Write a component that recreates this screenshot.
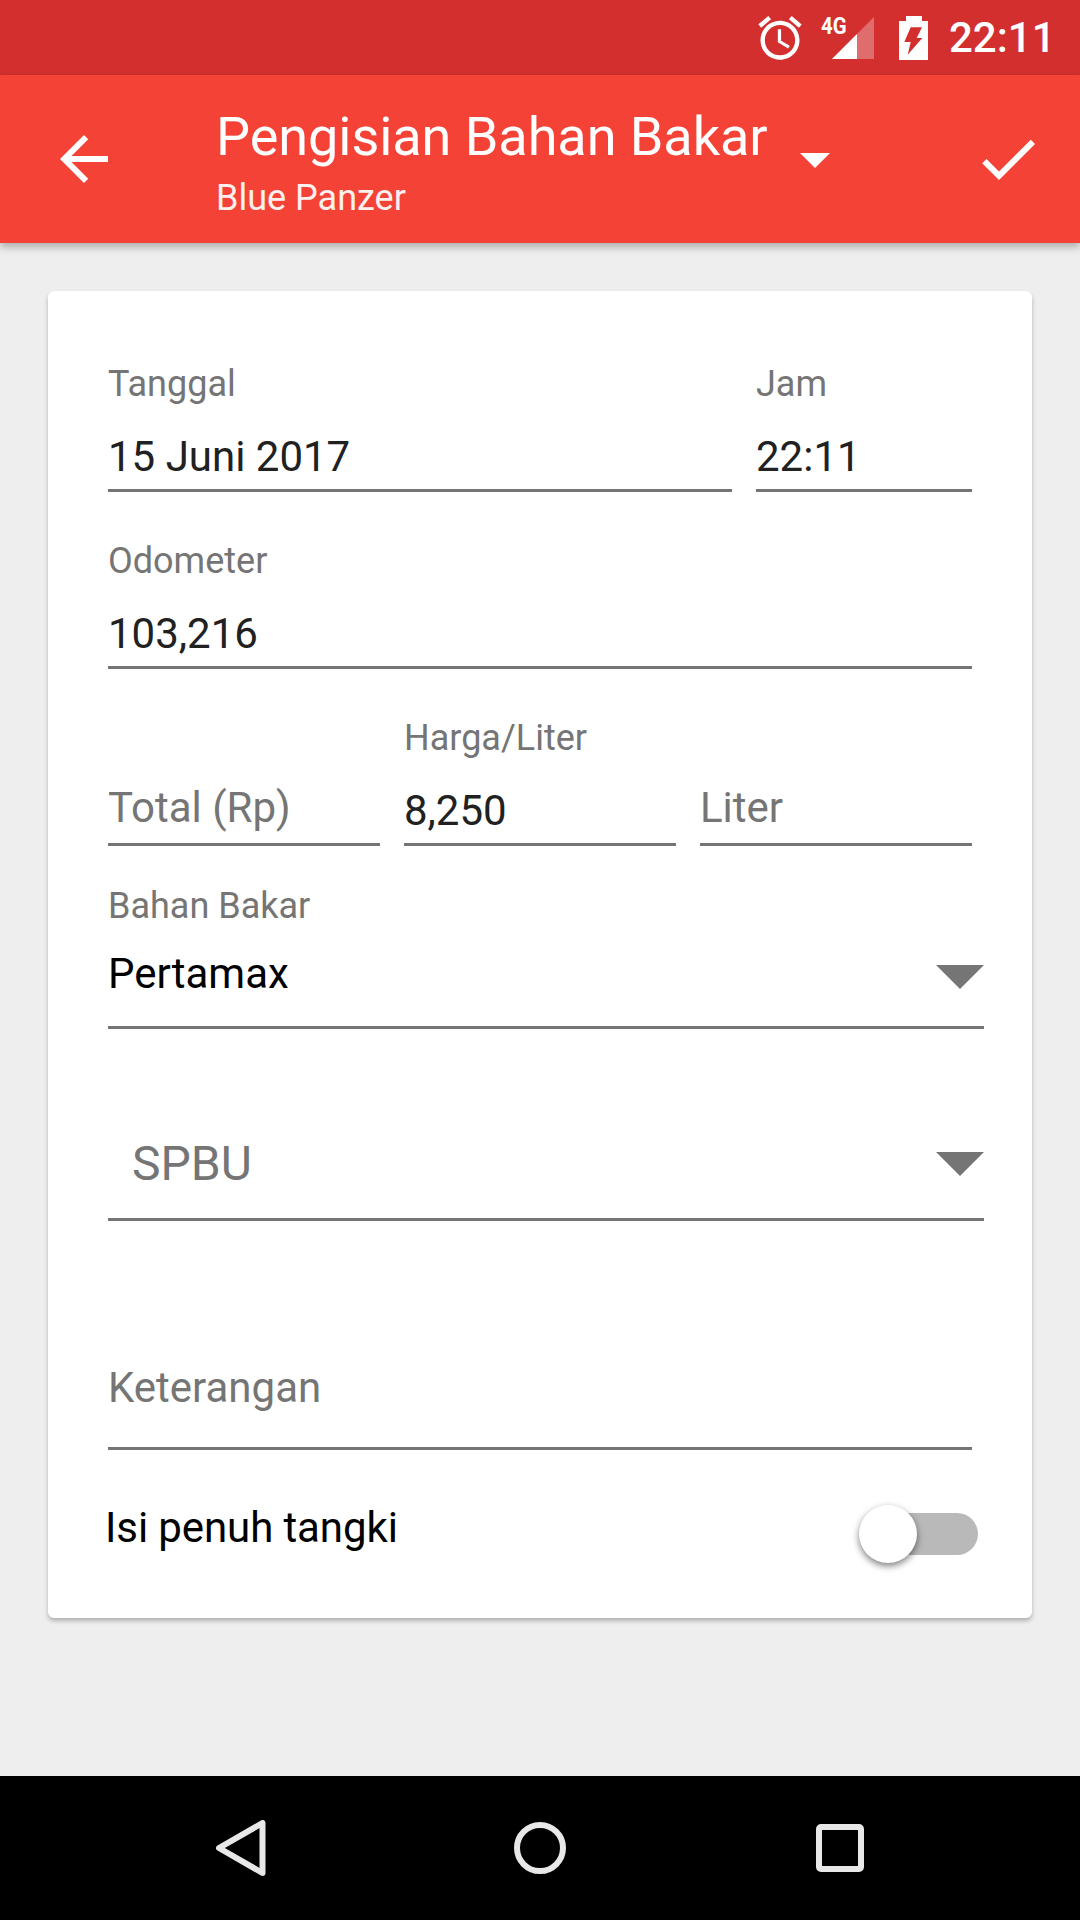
<div class="screen">
  <header class="status">
    <svg class="ic-alarm" width="52" height="52" viewBox="0 0 24 24" aria-hidden="true"><path fill="#fff" d="M22 5.72l-4.6-3.86-1.29 1.53 4.6 3.86L22 5.72zM7.88 3.39L6.6 1.86 2 5.71l1.29 1.53 4.59-3.85zM12.5 8H11v6l4.75 2.85.75-1.23-4-2.37V8zM12 4c-4.97 0-9 4.03-9 9s4.03 9 9 9 9-4.03 9-9-4.03-9-9-9zm0 16c-3.87 0-7-3.13-7-7s3.13-7 7-7 7 3.13 7 7-3.13 7-7 7z"/></svg>
    <div class="signal">
      <span class="net">4G</span>
      <svg width="42" height="42" viewBox="0 0 42 42" aria-hidden="true"><path fill="#fff" fill-opacity=".3" d="M42 0v42H0z"/><path fill="#fff" d="M25 17v25H0z"/></svg>
    </div>
    <svg class="ic-batt" width="29" height="44" viewBox="0 0 29 44" aria-hidden="true"><path fill="#fff" fill-rule="evenodd" d="M7 0h16v5h6v39H0V5h7zM11.7 11.3h11.3L17.7 22h5.6L8.7 38.7 11.7 26H5.3z"/></svg>
    <span class="clock">22:11</span>
  </header>

  <nav class="toolbar">
    <svg class="back" width="72" height="72" viewBox="0 0 24 24" aria-hidden="true"><path fill="#fff" d="M20 11H7.83l5.59-5.59L12 4l-8 8 8 8 1.41-1.41L7.83 13H20v-2z"/></svg>
    <div class="titles">
      <div class="title">Pengisian Bahan Bakar</div>
      <div class="sub">Blue Panzer</div>
    </div>
    <div class="caret"></div>
    <svg class="check" width="72" height="72" viewBox="0 0 24 24" aria-hidden="true"><path fill="#fff" d="M9 16.17L4.83 12l-1.42 1.41L9 19 21 7l-1.41-1.41z"/></svg>
  </nav>

  <main class="content">
    <section class="card">
      <div class="row first">
        <div class="field grow"><label>Tanggal</label><div class="val">15 Juni 2017</div></div>
        <div class="field jam"><label>Jam</label><div class="val">22:11</div></div>
      </div>
      <div class="row">
        <div class="field grow"><label>Odometer</label><div class="val">103,216</div></div>
      </div>
      <div class="row tight">
        <div class="field third"><label class="ghost">&nbsp;</label><div class="val hint">Total (Rp)</div></div>
        <div class="field third"><label>Harga/Liter</label><div class="val">8,250</div></div>
        <div class="field third"><label class="ghost">&nbsp;</label><div class="val hint">Liter</div></div>
      </div>
      <div class="spinner fuel">
        <label>Bahan Bakar</label>
        <div class="sp-line"><span class="sp-val">Pertamax</span><i class="tri"></i></div>
      </div>
      <div class="spinner spbu">
        <div class="sp-line"><span class="sp-hint">SPBU</span><i class="tri"></i></div>
      </div>
      <div class="ket"><div class="val hint">Keterangan</div></div>
      <div class="toggle-row">
        <span class="toggle-label">Isi penuh tangki</span>
        <div class="switch"><div class="track"></div><div class="thumb"></div></div>
      </div>
    </section>
  </main>

  <footer class="navbar">
    <svg width="50" height="56" viewBox="0 0 50 56" aria-hidden="true"><path fill="none" stroke="#e8e8e8" stroke-width="6" stroke-linejoin="round" d="M46.5 3v50L3 28z"/></svg>
    <svg width="52" height="52" viewBox="0 0 52 52" aria-hidden="true"><circle cx="26" cy="26" r="23" fill="none" stroke="#e8e8e8" stroke-width="6"/></svg>
    <svg width="48" height="48" viewBox="0 0 48 48" aria-hidden="true"><rect x="3" y="3" width="42" height="42" rx="2" fill="none" stroke="#e8e8e8" stroke-width="6"/></svg>
  </footer>
</div>

<style>
  :global(body) { margin: 0; }
  .screen { width: 1080px; height: 1920px; display: flex; flex-direction: column; background: #eee; font-family: Roboto, sans-serif; overflow: hidden; }

  .status { height: 75px; flex: none; background: #d32f2f; display: flex; align-items: center; padding-left: 754px; color: #fff; box-sizing: border-box; }
  .ic-alarm { margin-right: 15px; flex: none; }
  .signal { position: relative; width: 53px; height: 42px; margin-right: 25px; display: flex; justify-content: flex-end; flex: none; }
  .net { position: absolute; left: 0; top: -3px; font-size: 24px; font-weight: 700; line-height: 24px; transform: scaleX(.85); transform-origin: left center; }
  .ic-batt { margin-right: 22px; flex: none; }
  .clock { font-size: 42px; font-weight: 500; line-height: 44px; margin-left: -1px; }

  .toolbar { height: 168px; flex: none; background: #f44336; display: flex; align-items: center; color: #fff; box-shadow: 0 4px 8px rgba(0,0,0,.28); position: relative; z-index: 1; }
  .back { margin-left: 48px; flex: none; }
  .titles { margin-left: 96px; margin-top: 6px; width: 584px; flex: none; }
  .title { font-size: 54px; line-height: 64px; letter-spacing: -.05px; }
  .sub { font-size: 36px; line-height: 44px; margin-top: 7px; opacity: .92; }
  .caret { width: 0; height: 0; border-left: 15px solid transparent; border-right: 15px solid transparent; border-top: 15px solid #fff; flex: none; margin-left: 0; margin-top: 3px; }
  .check { margin-left: 142px; flex: none; }

  .content { flex: 1; padding: 48px 48px 0; }
  .card { height: 1327px; box-sizing: border-box; background: #fff; border-radius: 6px; box-shadow: 0 3px 4px rgba(0,0,0,.25); padding: 0 60px; display: flex; flex-direction: column; }

  .row { display: flex; gap: 24px; height: 177px; flex: none; }
  .row.first { margin-top: 71px; }
  .row.tight { height: 168px; }
  .field { display: flex; flex-direction: column; }
  .grow { flex: 1; min-width: 0; }
  .jam { width: 216px; flex: none; }
  .third { flex: 1 1 0; }
  label { font-size: 36px; line-height: 44px; color: #757575; display: block; }
  .val { font-size: 42px; line-height: 60px; color: #212121; padding: 21px 0 2px; border-bottom: 3px solid #757575; }
  .val.hint { color: #757575; padding: 18px 0 5px; }

  .spinner { margin-right: -12px; flex: none; }
  .sp-line { display: flex; align-items: center; justify-content: space-between; border-bottom: 3px solid #757575; box-sizing: border-box; }
  .fuel .sp-line { height: 101px; }
  .sp-val { font-size: 42px; line-height: 60px; color: #000; margin-bottom: 6px; }
  .spbu { padding-top: 80px; }
  .spbu .sp-line { height: 112px; }
  .sp-hint { font-size: 48px; line-height: 60px; color: #757575; padding-left: 24px; }
  .tri { width: 0; height: 0; border-left: 24px solid transparent; border-right: 24px solid transparent; border-top: 24px solid #757575; }

  .ket { height: 229px; flex: none; display: flex; flex-direction: column; justify-content: flex-end; }
  .ket .val.hint { padding: 0 0 29px; }
  .toggle-row { display: flex; align-items: flex-start; justify-content: space-between; margin-top: 48px; margin-left: -3px; margin-right: -6px; }
  .toggle-label { font-size: 42px; line-height: 60px; color: #000; letter-spacing: -.1px; }
  .switch { position: relative; width: 120px; height: 60px; margin-top: 7px; }
  .track { position: absolute; right: 0; top: 8px; width: 114px; height: 42px; border-radius: 21px; background: #b9b9b9; }
  .thumb { position: absolute; left: 1px; top: 0; width: 58px; height: 58px; border-radius: 50%; background: #fff; box-shadow: 0 3px 7px rgba(0,0,0,.5); }

  .navbar { height: 144px; flex: none; background: #000; display: flex; align-items: center; }
  .navbar svg { flex: none; }
  .navbar svg:nth-child(1) { margin-left: 216px; }
  .navbar svg:nth-child(2) { margin-left: 248px; }
  .navbar svg:nth-child(3) { margin-left: 250px; }
</style>
